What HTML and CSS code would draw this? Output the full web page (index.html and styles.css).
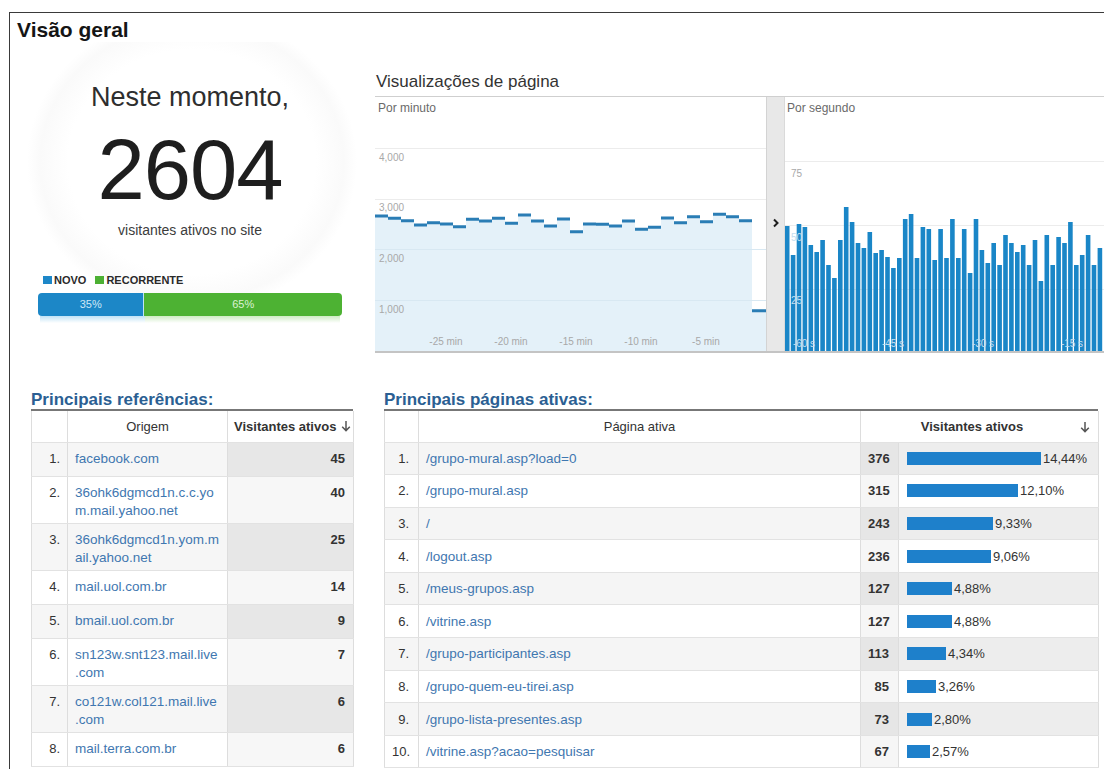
FILE: index.html
```html
<!DOCTYPE html>
<html lang="pt-BR">
<head>
<meta charset="utf-8">
<title>Visão geral</title>
<link rel="stylesheet" href="styles.css">
</head>
<body>
<div class="frame">
  <h1 class="title">Visão geral</h1>

  <div class="top">
    <section class="now">
      <div class="now-label">Neste momento,</div>
      <div class="now-count">2604</div>
      <div class="now-sub">visitantes ativos no site</div>
      <div class="legend">
        <span class="key key-new"></span><span class="key-text">NOVO</span>
        <span class="key key-ret"></span><span class="key-text">RECORRENTE</span>
      </div>
      <div class="split">
        <div class="split-new" style="width:35%">35%</div>
        <div class="split-ret">65%</div>
      </div>
      <div class="split-reflect"></div>
    </section>

    <section class="views">
      <h2 class="views-title">Visualizações de página</h2>
      <div class="chart-box">
        <div class="pane pane-min">
          <svg width="391" height="254" viewBox="0 0 391 254">
            <text class="pane-label" x="3" y="15">Por minuto</text>
            <g class="grid">
              <line x1="0" y1="51.5" x2="391" y2="51.5"/>
              <line x1="0" y1="102.5" x2="391" y2="102.5"/>
              <line x1="0" y1="152.5" x2="391" y2="152.5"/>
              <line x1="0" y1="203.5" x2="391" y2="203.5"/>
            </g>
            <path class="area" d="M0 254V119H13V121.3H26V123.7H39V128H52V125.7H65V127H78V129.7H91V122.3H104V124H117V121.3H130V126.3H143V118H156V124H169V129H182V122H195V134.7H208V127H221V127.3H234V129H247V124H260V132.3H273V130.3H286V121H299V125.7H312V119.7H325V124.7H338V117.3H351V119.7H364V123.7H377V213.7H391V254Z"/>
            <g class="grid grid-over">
              <line x1="0" y1="152.5" x2="391" y2="152.5"/>
              <line x1="0" y1="203.5" x2="391" y2="203.5"/>
            </g>
            <path class="steps" d="M0 119H13M13 121.3H26M26 123.7H39M39 128H52M52 125.7H65M65 127H78M78 129.7H91M91 122.3H104M104 124H117M117 121.3H130M130 126.3H143M143 118H156M156 124H169M169 129H182M182 122H195M195 134.7H208M208 127H221M221 127.3H234M234 129H247M247 124H260M260 132.3H273M273 130.3H286M286 121H299M299 125.7H312M312 119.7H325M325 124.7H338M338 117.3H351M351 119.7H364M364 123.7H377M377 213.7H391"/>
            <g class="axis">
              <text x="4" y="64">4,000</text>
              <text x="4" y="114">3,000</text>
              <text x="4" y="165">2,000</text>
              <text x="4" y="216">1,000</text>
              <text class="mid" x="71" y="248">-25 min</text>
              <text class="mid" x="136" y="248">-20 min</text>
              <text class="mid" x="201" y="248">-15 min</text>
              <text class="mid" x="266" y="248">-10 min</text>
              <text class="mid" x="331" y="248">-5 min</text>
            </g>
          </svg>
        </div>
        <div class="pane-divider">
          <svg width="17" height="254" viewBox="0 0 17 254">
            <path class="chevron" d="M7 122.5L10.5 126L7 129.5"/>
          </svg>
        </div>
        <div class="pane pane-sec">
          <svg width="319" height="254" viewBox="0 0 319 254">
            <text class="pane-label" x="2" y="15">Por segundo</text>
            <g class="grid">
              <line x1="0" y1="64.5" x2="319" y2="64.5"/>
              <line x1="0" y1="128.5" x2="319" y2="128.5"/>
              <line x1="0" y1="192.5" x2="319" y2="192.5"/>
            </g>
            <path class="bars" d="M2.2 129V254M8.1 158V254M14 127V254M19.9 130V254M25.8 148V254M31.7 155V254M37.6 143V254M43.5 168V254M49.4 181V254M55.3 143V254M61.2 110V254M67.1 125V254M73 146V254M78.9 151V254M84.8 135V254M90.7 156V254M96.6 153V254M102.5 160V254M108.4 171V254M114.3 161V254M120.2 122V254M126.1 117V254M132 161V254M137.9 130V254M143.8 132V254M149.7 163V254M155.6 132V254M161.5 161V254M167.4 122V254M173.3 161V254M179.2 132V254M185.1 176V254M191 122V254M196.9 153V254M202.8 166V254M208.7 146V254M214.6 168V254M220.5 138V254M226.4 146V254M232.3 155V254M238.2 148V254M244.1 168V254M250 143V254M255.9 184V254M261.8 138V254M267.7 168V254M273.6 140V254M279.5 146V254M285.4 125V254M291.3 168V254M297.2 158V254M303.1 138V254M309 168V254M314.9 151V254"/>
            <g class="axis">
              <text x="6" y="80">75</text>
              <text class="on-bar" x="6" y="144">50</text>
              <text class="on-bar" x="6" y="207">25</text>
              <text class="on-bar mid" x="19" y="250">-60 s</text>
              <text class="on-bar mid" x="108" y="250">-45 s</text>
              <text class="on-bar mid" x="198" y="250">-30 s</text>
              <text class="on-bar mid" x="287" y="250">-15 s</text>
            </g>
          </svg>
        </div>
      </div>
    </section>
  </div>

  <div class="bottom">
    <section class="refs">
      <h3 class="tbl-title">Principais referências:</h3>
      <table class="tbl tbl-refs">
        <colgroup><col class="c-num"><col class="c-src"><col class="c-val"></colgroup>
        <thead>
          <tr>
            <th></th>
            <th class="th-center">Origem</th>
            <th class="th-sort">Visitantes ativos <svg class="sort-arrow" width="10" height="12" viewBox="0 0 10 12"><path d="M5 1V10.5M1.2 6.8L5 10.6L8.8 6.8"/></svg></th>
          </tr>
        </thead>
        <tbody>
          <tr class="odd"><td class="num">1.</td><td class="link">facebook.com</td><td class="val">45</td></tr>
          <tr><td class="num">2.</td><td class="link">36ohk6dgmcd1n.c.c.yo<br>m.mail.yahoo.net</td><td class="val">40</td></tr>
          <tr class="odd"><td class="num">3.</td><td class="link">36ohk6dgmcd1n.yom.m<br>ail.yahoo.net</td><td class="val">25</td></tr>
          <tr><td class="num">4.</td><td class="link">mail.uol.com.br</td><td class="val">14</td></tr>
          <tr class="odd"><td class="num">5.</td><td class="link">bmail.uol.com.br</td><td class="val">9</td></tr>
          <tr><td class="num">6.</td><td class="link">sn123w.snt123.mail.live<br>.com</td><td class="val">7</td></tr>
          <tr class="odd"><td class="num">7.</td><td class="link">co121w.col121.mail.live<br>.com</td><td class="val">6</td></tr>
          <tr><td class="num">8.</td><td class="link">mail.terra.com.br</td><td class="val">6</td></tr>
        </tbody>
      </table>
    </section>

    <section class="pages">
      <h3 class="tbl-title">Principais páginas ativas:</h3>
      <table class="tbl tbl-pages">
        <colgroup><col class="c-num"><col class="c-page"><col class="c-count"><col class="c-bar"></colgroup>
        <thead>
          <tr>
            <th></th>
            <th class="th-center">Página ativa</th>
            <th class="th-visits" colspan="2"><svg class="sort-arrow" width="10" height="12" viewBox="0 0 10 12"><path d="M5 1V10.5M1.2 6.8L5 10.6L8.8 6.8"/></svg><span>Visitantes ativos</span></th>
          </tr>
        </thead>
        <tbody>
          <tr class="odd"><td class="num">1.</td><td class="link">/grupo-mural.asp?load=0</td><td class="val">376</td><td class="bar-cell"><span class="bar" style="width:134px"></span><span class="pct">14,44%</span></td></tr>
          <tr><td class="num">2.</td><td class="link">/grupo-mural.asp</td><td class="val">315</td><td class="bar-cell"><span class="bar" style="width:111px"></span><span class="pct">12,10%</span></td></tr>
          <tr class="odd"><td class="num">3.</td><td class="link">/</td><td class="val">243</td><td class="bar-cell"><span class="bar" style="width:86px"></span><span class="pct">9,33%</span></td></tr>
          <tr><td class="num">4.</td><td class="link">/logout.asp</td><td class="val">236</td><td class="bar-cell"><span class="bar" style="width:84px"></span><span class="pct">9,06%</span></td></tr>
          <tr class="odd"><td class="num">5.</td><td class="link">/meus-grupos.asp</td><td class="val">127</td><td class="bar-cell"><span class="bar" style="width:45px"></span><span class="pct">4,88%</span></td></tr>
          <tr><td class="num">6.</td><td class="link">/vitrine.asp</td><td class="val">127</td><td class="bar-cell"><span class="bar" style="width:45px"></span><span class="pct">4,88%</span></td></tr>
          <tr class="odd"><td class="num">7.</td><td class="link">/grupo-participantes.asp</td><td class="val">113</td><td class="bar-cell"><span class="bar" style="width:39px"></span><span class="pct">4,34%</span></td></tr>
          <tr><td class="num">8.</td><td class="link">/grupo-quem-eu-tirei.asp</td><td class="val">85</td><td class="bar-cell"><span class="bar" style="width:29px"></span><span class="pct">3,26%</span></td></tr>
          <tr class="odd"><td class="num">9.</td><td class="link">/grupo-lista-presentes.asp</td><td class="val">73</td><td class="bar-cell"><span class="bar" style="width:25px"></span><span class="pct">2,80%</span></td></tr>
          <tr><td class="num">10.</td><td class="link">/vitrine.asp?acao=pesquisar</td><td class="val">67</td><td class="bar-cell"><span class="bar" style="width:23px"></span><span class="pct">2,57%</span></td></tr>
        </tbody>
      </table>
    </section>
  </div>
</div>
</body>
</html>
```

FILE: styles.css
```css
* { box-sizing: border-box; }

html, body {
  margin: 0;
  background: #fff;
  overflow: hidden;
}

body {
  font-family: "Liberation Sans", Arial, sans-serif;
  color: #333;
}

/* outer panel */
.frame {
  margin: 12px 0 0 9px;
  height: 757px;
  border-top: 1px solid #3a3a3a;
  border-left: 1px solid #3a3a3a;
  padding-top: 5px;
  overflow: hidden;
}

.title {
  margin: 0;
  padding-left: 7px;
  font-size: 21px;
  line-height: 24px;
  font-weight: bold;
  color: #151515;
}

/* ---------- top row ---------- */
.top {
  display: flex;
  height: 311px;
}

.now {
  width: 360px;
  flex: none;
  padding-top: 39px;
  background: radial-gradient(ellipse 165px 150px at 182px 120px, #fff 0, #fff 75%, #fafafa 92%, #fff 100%);
}

.now-label {
  text-align: center;
  font-size: 27px;
  line-height: 32px;
  color: #2e2e2e;
}

.now-count {
  margin-top: 14px;
  text-align: center;
  font-size: 85px;
  line-height: 86px;
  color: #1e1e1e;
  letter-spacing: -1px;
}

.now-sub {
  margin-top: 8px;
  text-align: center;
  font-size: 14px;
  line-height: 18px;
  color: #3c3c3c;
}

.legend {
  margin-top: 35px;
  padding-left: 33px;
  display: flex;
  align-items: center;
  font-size: 11px;
  line-height: 12px;
  font-weight: bold;
  color: #2a2a2a;
}

.key {
  width: 9px;
  height: 8px;
  margin-right: 2px;
}

.key-new { background: #1d87c8; }
.key-ret { background: #4cb033; margin-left: 9px; }

.split {
  margin: 7px 0 0 28px;
  width: 304px;
  height: 23px;
  display: flex;
  border-radius: 4px;
  overflow: hidden;
  font-size: 11px;
  line-height: 23px;
  text-align: center;
}

.split-new {
  background: #1c87c7;
  color: #cfe8f6;
  border-right: 1px solid #bfe3f6;
}

.split-ret {
  flex: 1;
  background: #4db233;
  color: #dcf1d3;
}

.split-reflect {
  margin-left: 30px;
  width: 300px;
  height: 7px;
  background:
    linear-gradient(to bottom, rgba(255,255,255,0.45), #fff),
    linear-gradient(to right, #8ccbee 35%, #a6dc94 35%);
}

/* page views chart */
.views {
  flex: 1;
  margin-left: 5px;
  padding-top: 30px;
}

.views-title {
  margin: 0 0 4px 1px;
  font-size: 17px;
  line-height: 20px;
  font-weight: normal;
  color: #333;
}

.chart-box {
  display: flex;
  border-top: 1px solid #cfcfcf;
  border-bottom: 2px solid #c4c4c4;
}

.pane svg,
.pane-divider svg {
  display: block;
}

.pane-min { width: 391px; flex: none; }
.pane-sec { flex: 1; overflow: hidden; }

.pane-divider {
  width: 19px;
  flex: none;
  background: #e8e8e8;
  border-left: 1px solid #d3d3d3;
  border-right: 1px solid #dadada;
}

.chevron {
  fill: none;
  stroke: #1f1f1f;
  stroke-width: 2;
}

.pane-label {
  font-family: "Liberation Sans", Arial, sans-serif;
  font-size: 12px;
  fill: #6a6a6a;
}

.grid line {
  stroke: #ececec;
  stroke-width: 1;
}

.grid-over line {
  stroke: #d8e8f2;
}

.area {
  fill: #e4f1f9;
}

.steps {
  fill: none;
  stroke: #2a7db5;
  stroke-width: 3;
}

.bars {
  fill: none;
  stroke: #1a86c7;
  stroke-width: 4.6;
}

.axis text {
  font-family: "Liberation Sans", Arial, sans-serif;
  font-size: 10px;
  fill: #a8a8a8;
}

.axis .mid { text-anchor: middle; }

.axis .on-bar {
  fill: #c4def0;
}

/* ---------- bottom row: tables ---------- */
.bottom {
  display: flex;
  gap: 31px;
  padding-left: 21px;
  margin-top: 37px;
}

.refs { width: 322px; flex: none; }
.pages { width: 714px; flex: none; }

.tbl-title {
  margin: 0;
  font-size: 17px;
  line-height: 19px;
  font-weight: bold;
  color: #2b5f93;
  border-bottom: 2px solid #777;
}

.tbl {
  width: 100%;
  table-layout: fixed;
  border-collapse: collapse;
  font-size: 13px;
}

.tbl th,
.tbl td {
  border-left: 1px solid #dddddd;
  border-right: 1px solid #dddddd;
  border-bottom: 1px solid #e2e2e2;
}

.tbl thead tr { height: 31px; }

.tbl th {
  font-weight: normal;
  color: #333;
  background: #fff;
  padding: 0 6px;
}

.tbl .th-center { text-align: center; }

.th-sort {
  text-align: right;
  font-weight: bold !important;
  padding-right: 5px !important;
  white-space: nowrap;
}

.sort-arrow {
  vertical-align: -1px;
  margin-left: 1px;
}

.sort-arrow path {
  fill: none;
  stroke: #555;
  stroke-width: 1.5;
}

.th-visits {
  font-weight: bold !important;
  text-align: center;
  padding: 0 8px 0 4px !important;
}

.th-visits .sort-arrow {
  float: right;
  margin-top: 2px;
}

.tbl td {
  padding: 0 7px;
  color: #333;
}

.tbl .num {
  text-align: right;
  padding-right: 7px;
}

.tbl .link {
  color: #3f77b0;
  white-space: nowrap;
}

.tbl .val {
  text-align: right;
  font-weight: bold;
}

/* referrers */
.c-num { width: 36px; }
.c-src { width: 160px; }
.c-val { width: 126px; }

.tbl-refs tbody tr { height: 34px; }

.tbl-refs td {
  vertical-align: top;
  padding-top: 7px;
  padding-bottom: 3px;
  line-height: 18px;
  font-size: 13.5px;
}

.tbl-refs .num { font-size: 13px; }
.tbl-refs .val { padding-right: 8px; font-size: 13px; }

.tbl-refs tbody tr { background: #fff; }
.tbl-refs tbody tr .val { background: #f7f7f7; }
.tbl-refs tbody tr.odd { background: #f6f6f6; }
.tbl-refs tbody tr.odd .val { background: #e7e7e7; }

/* active pages */
.tbl-pages .c-num { width: 34px; }
.c-page { width: 442px; }
.c-count { width: 38px; }
.c-bar { width: 200px; }

.tbl-pages tbody tr { height: 32.6px; }

.tbl-pages td {
  vertical-align: middle;
  font-size: 13.5px;
}

.tbl-pages .num { font-size: 13px; padding-right: 9px; }
.tbl-pages .val { font-size: 13px; padding-right: 9px; }

.tbl-pages tbody tr { background: #fff; }
.tbl-pages tbody tr .val { background: #f6f6f6; }
.tbl-pages tbody tr.odd { background: #f5f5f5; }
.tbl-pages tbody tr.odd .val { background: #e6e6e6; }
.tbl-pages tbody tr.odd .bar-cell { background: #ededed; }

.bar-cell {
  padding-left: 8px !important;
  white-space: nowrap;
}

.bar {
  display: inline-block;
  height: 13px;
  background: #1e80cb;
  vertical-align: -2px;
}

.pct {
  margin-left: 2px;
  font-size: 13px;
  color: #333;
}
```
